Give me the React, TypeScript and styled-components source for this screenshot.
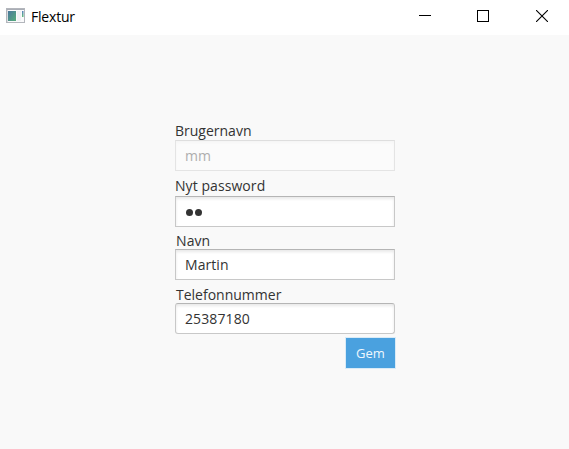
import React from "react";
import styled, { createGlobalStyle } from "styled-components";

const GlobalStyle = createGlobalStyle`
  * { box-sizing: border-box; }
  body { margin: 0; background: #f9f9f9; overflow: hidden; }
`;

const Window = styled.div`
  width: 569px;
  height: 449px;
  display: flex;
  flex-direction: column;
  background: #f9f9f9;
  font-family: "Open Sans", "Noto Sans", sans-serif;
  color: #333;
`;

const TitleBar = styled.header`
  height: 35px;
  flex: none;
  display: flex;
  align-items: flex-start;
  background: #fff;
`;

const AppIcon = styled.svg`
  display: block;
  margin: 8px 0 0 6px;
`;

const Title = styled.h1<{ $spacing: number }>`
  margin: 7px 0 0 6px;
  font-size: 14px;
  line-height: 20px;
  font-weight: 400;
  color: #000;
  letter-spacing: ${(p) => p.$spacing}px;
`;

const Controls = styled.div`
  display: flex;
  gap: 46px;
  margin: 10px 21px 0 auto;
`;

const ControlButton = styled.button`
  width: 12px;
  height: 12px;
  padding: 0;
  border: 0;
  background: none;
  svg { display: block; }
  &:last-child { margin-left: 1px; }
`;

const Form = styled.form`
  width: 220px;
  margin: 86px 0 0 175px;
  display: flex;
  flex-direction: column;
`;

const Field = styled.div<{ $height: number }>`
  height: ${(p) => p.$height}px;
  display: flex;
  flex-direction: column;
`;

const Label = styled.label<{ $spacing: number; $height: number; $indent?: number }>`
  height: ${(p) => p.$height}px;
  padding-left: ${(p) => p.$indent ?? 0}px;
  font-size: 14px;
  line-height: 20px;
  white-space: nowrap;
  letter-spacing: ${(p) => p.$spacing}px;
`;

const Input = styled.div<{ $disabled?: boolean; $radius?: number; $spacing: number }>`
  height: 31px;
  flex: none;
  display: flex;
  align-items: center;
  padding: 0 9px;
  border: 1px solid ${(p) => (p.$disabled ? "#e4e4e4" : "#c8c8c8")};
  border-top-color: ${(p) => (p.$disabled ? "#dedede" : "#b5b5b5")};
  border-radius: ${(p) => p.$radius ?? 0}px;
  background: ${(p) => (p.$disabled ? "#fbfbfb" : "#fff")};
  box-shadow: inset 0 2px 3px ${(p) => (p.$disabled ? "rgba(0,0,0,.025)" : "rgba(0,0,0,.09)")};
  color: ${(p) => (p.$disabled ? "#aeaeae" : "#333")};
  font-size: 14px;
  line-height: 20px;
  letter-spacing: ${(p) => p.$spacing}px;
`;

const Dots = styled.span`
  display: flex;
  gap: 1.5px;
  padding: 2px 0 0 0.5px;
`;

const Dot = styled.i`
  width: 7.5px;
  height: 7.5px;
  border-radius: 50%;
  background: #333;
`;

const SaveButton = styled.button`
  align-self: flex-end;
  width: 51px;
  height: 32px;
  margin: 3px -1px 0 0;
  padding: 0;
  border: 1px solid #d9ebf7;
  background: #4aa1df;
  color: #eef7fd;
  font: 13px/28px "Open Sans", "Noto Sans", sans-serif;
`;

const App = () => (
  <Window>
    <GlobalStyle />
    <TitleBar>
      <AppIcon width="19" height="15" viewBox="0 0 19 15">
        <defs>
          <linearGradient id="pane" x1="0" y1="0" x2="1" y2="1">
            <stop offset="0" stopColor="#4a779c" />
            <stop offset="1" stopColor="#55ad7b" />
          </linearGradient>
          <linearGradient id="bar" x1="0" y1="0" x2="0" y2="1">
            <stop offset="0" stopColor="#587fc0" />
            <stop offset="1" stopColor="#62bd78" />
          </linearGradient>
        </defs>
        <rect x=".5" y=".5" width="18" height="14" fill="#fafafb" stroke="#b3b6bc" />
        <rect x="1" y="1" width="17" height="1" fill="#a9adb5" />
        <rect x="1" y="2" width="1" height="12" fill="#dcdee2" />
        <rect x="2" y="3" width="8" height="10" fill="url(#pane)" />
        <rect x="11" y="3" width="4" height="10" fill="#f0f1f4" />
        <rect x="16" y="3" width="1.5" height="6" fill="url(#bar)" />
      </AppIcon>
      <Title $spacing={-0.2}>Flextur</Title>
      <Controls>
        <ControlButton type="button" aria-label="Minimer">
          <svg width="12" height="12"><path d="M0 5.5H12" stroke="#000" /></svg>
        </ControlButton>
        <ControlButton type="button" aria-label="Maksimer">
          <svg width="12" height="12"><rect x=".5" y=".5" width="11" height="11" fill="none" stroke="#000" /></svg>
        </ControlButton>
        <ControlButton type="button" aria-label="Luk">
          <svg width="12" height="12"><path d="M0 0L12 12M12 0L0 12" stroke="#000" strokeWidth="1.1" /></svg>
        </ControlButton>
      </Controls>
    </TitleBar>
    <Form>
      <Field $height={55}>
        <Label $height={19} $spacing={0}>Brugernavn</Label>
        <Input $disabled $spacing={0}>mm</Input>
      </Field>
      <Field $height={55}>
        <Label $height={20} $spacing={0.07}>Nyt password</Label>
        <Input $spacing={0}>
          <Dots><Dot /><Dot /></Dots>
        </Input>
      </Field>
      <Field $height={54}>
        <Label $height={18} $indent={1} $spacing={0.1}>Navn</Label>
        <Input $spacing={0.07}>Martin</Input>
      </Field>
      <Field $height={49}>
        <Label $height={18} $indent={1} $spacing={0}>Telefonnummer</Label>
        <Input $radius={3} $spacing={0.12}>25387180</Input>
      </Field>
      <SaveButton type="button">Gem</SaveButton>
    </Form>
  </Window>
);

export default App;
